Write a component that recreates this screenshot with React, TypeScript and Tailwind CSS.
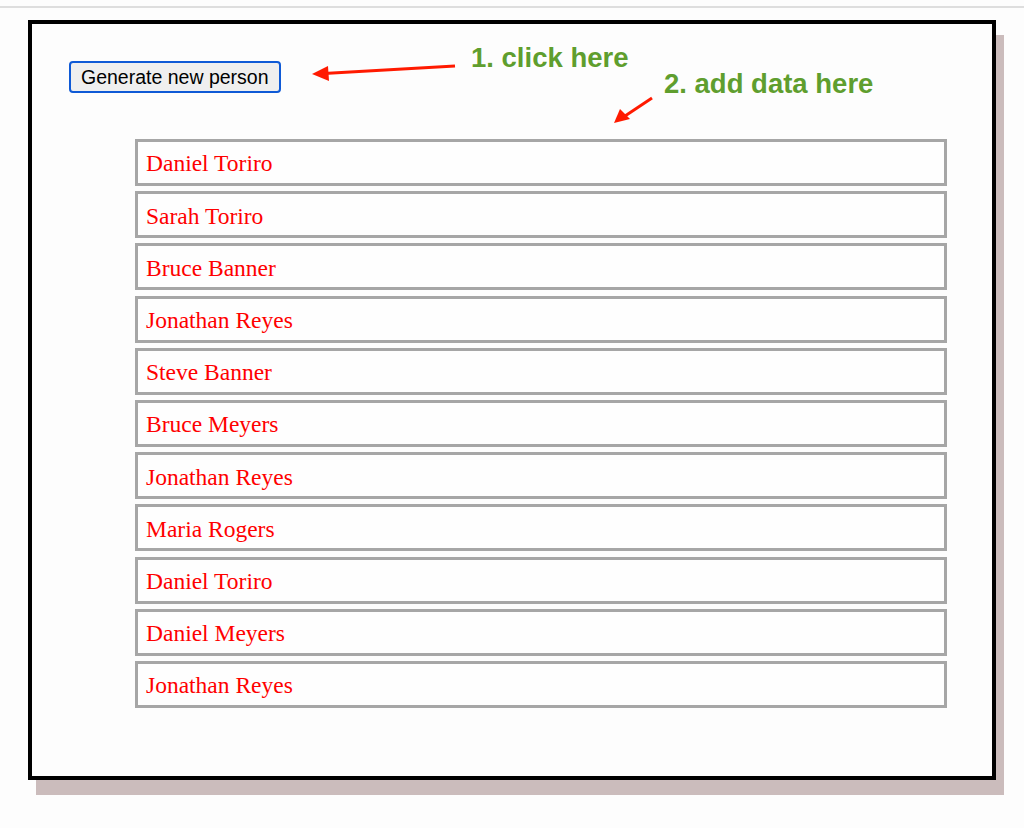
import React from "react";

const people = [
  "Daniel Toriro",
  "Sarah Toriro",
  "Bruce Banner",
  "Jonathan Reyes",
  "Steve Banner",
  "Bruce Meyers",
  "Jonathan Reyes",
  "Maria Rogers",
  "Daniel Toriro",
  "Daniel Meyers",
  "Jonathan Reyes",
];

export default function App() {
  return (
    <div className="min-h-[828px] w-[1024px] bg-[#fdfdfd]">
      <div className="h-[6px]" />
      <div className="h-[2px] bg-[#dedede]" />
      <div className="pl-[28px] pt-[12px]">
        <div className="relative w-[968px] h-[760px] border-4 border-black bg-[#fdfdfd] shadow-[8px_15px_0_0_#cbbcbc] pl-[37px] pt-[37px]">
          <button className="h-[32px] w-[212px] rounded-[4px] border-2 border-[#0f5ad6] bg-[#efefef] px-[10px] pt-[1px] text-left text-[19.5px] leading-none text-black font-['Liberation_Sans',Arial,sans-serif]">
            Generate new person
          </button>

          <div className="mt-[46px] ml-[66px] flex w-[812px] flex-col gap-[5.2px]">
            {people.map((name, i) => (
              <div
                key={i}
                className="flex h-[47px] items-center border-[3px] border-[#a6a6a6] bg-[#fefefe] pl-[8px] pt-[3px] text-[23.5px] text-[#ff0000] font-['Liberation_Serif','Times_New_Roman',serif]"
              >
                {name}
              </div>
            ))}
          </div>

          {/* annotations */}
          <div className="absolute left-[439px] top-[20px] text-[27.5px] font-bold leading-none text-[#5f9e2e] font-['Liberation_Sans',Arial,sans-serif]">
            1. click here
          </div>
          <div className="absolute left-[632px] top-[46px] text-[27.5px] font-bold leading-none text-[#5f9e2e] font-['Liberation_Sans',Arial,sans-serif]">
            2. add data here
          </div>
          <svg
            className="absolute left-0 top-0 pointer-events-none"
            width="960"
            height="120"
            viewBox="0 0 960 120"
          >
            <line x1="423" y1="42" x2="292" y2="49.5" stroke="#ff1a00" strokeWidth="3" />
            <polygon points="280,50 296,42 297,57" fill="#ff1a00" />
            <line x1="620" y1="74" x2="593" y2="92" stroke="#ff1a00" strokeWidth="3" />
            <polygon points="582,99 588,85 598,95" fill="#ff1a00" />
          </svg>
        </div>
      </div>
    </div>
  );
}
